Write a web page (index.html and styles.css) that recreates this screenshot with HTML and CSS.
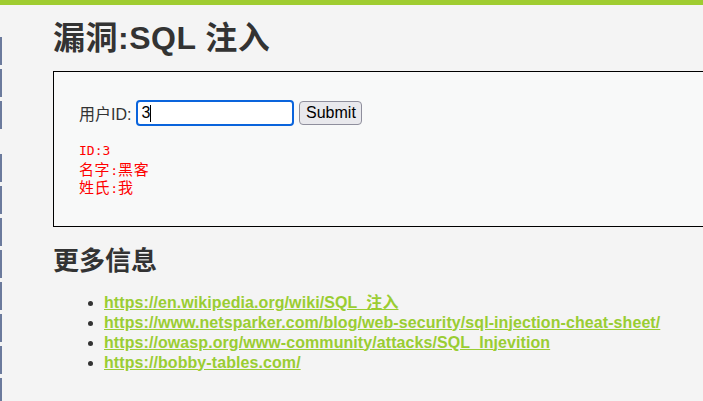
FILE: index.html
```html
<!DOCTYPE html>
<html lang="zh">
<head>
<meta charset="utf-8">
<title>漏洞:SQL 注入</title>
<link rel="stylesheet" href="styles.css">
</head>
<body>
<div class="topbar"></div>
<div class="layout">
  <nav class="sidebar">
    <ul class="menu">
      <li></li><li></li><li></li>
    </ul>
    <ul class="menu menu-second">
      <li></li><li></li><li></li><li></li><li></li><li></li><li></li><li></li>
    </ul>
  </nav>
  <main class="main">
    <h1 class="title">漏洞:SQL 注入</h1>
    <div class="vuln-box">
      <form class="form-row">
        <label class="label" for="uid">用户ID:</label>
        <span class="input-wrap">
          <input class="text-input" id="uid" type="text" value="3">
          <span class="caret"></span>
        </span>
        <button class="submit" type="button">Submit</button>
      </form>
      <div class="result">
        <div class="line">ID:3</div>
        <div class="line"><span class="cjk">名字</span>:<span class="cjk">黑客</span></div>
        <div class="line"><span class="cjk">姓氏</span>:<span class="cjk">我</span></div>
      </div>
    </div>
    <h2 class="subtitle">更多信息</h2>
    <ul class="links">
      <li><a href="#">https://en.wikipedia.org/wiki/SQL_注入</a></li>
      <li><a href="#">https://www.netsparker.com/blog/web-security/sql-injection-cheat-sheet/</a></li>
      <li><a href="#">https://owasp.org/www-community/attacks/SQL_Injevition</a></li>
      <li><a href="#">https://bobby-tables.com/</a></li>
    </ul>
  </main>
</div>
</body>
</html>
```

FILE: styles.css
```css
html, body {
  margin: 0;
  padding: 0;
}
body {
  background: #f4f4f4;
  color: #333;
  font-family: "Liberation Sans", Arial, "Noto Sans CJK SC", sans-serif;
  font-size: 16px;
  width: 703px;
  height: 401px;
  overflow: hidden;
}
.topbar {
  height: 5px;
  background: #9fcc30;
}
.layout {
  display: flex;
  align-items: flex-start;
}
.sidebar {
  width: 2px;
  flex: none;
  padding-top: 32px;
}
.menu {
  list-style: none;
  margin: 0;
  padding: 0;
  display: flex;
  flex-direction: column;
  gap: 4px;
}
.menu li {
  height: 28px;
  background: #6b7a9c;
}
.menu-second {
  margin-top: 25px;
}
.main {
  flex: none;
  padding-left: 51px;
}
.title {
  margin: 13px 0 0;
  font-size: 32px;
  line-height: 40px;
  letter-spacing: 0.5px;
  font-weight: bold;
  color: #333;
}
.vuln-box {
  margin-top: 13px;
  width: 700px;
  border: 1px solid #000;
  background: #f8f9f9;
  padding: 28px 25px 28px;
  box-sizing: border-box;
}
.form-row {
  display: flex;
  align-items: center;
  height: 26px;
  margin: 0;
}
.label {
  color: #333;
  font-size: 16px;
  margin-right: 5px;
}
.input-wrap {
  position: relative;
  display: block;
}
.text-input {
  display: block;
  box-sizing: border-box;
  width: 158px;
  height: 26px;
  border: 2px solid #0a64dc;
  border-radius: 4px;
  background: #fff;
  padding: 0 3px;
  font-family: "Liberation Sans", Arial, sans-serif;
  font-size: 16px;
  color: #000;
  outline: none;
  caret-color: transparent;
}
.caret {
  position: absolute;
  left: 14px;
  top: 5px;
  width: 1px;
  height: 17px;
  background: #000;
}
.submit {
  margin-left: 5px;
  box-sizing: border-box;
  height: 24px;
  width: 63px;
  padding: 0;
  border: 1px solid #8f8f9d;
  border-radius: 4px;
  background: #e9e9ed;
  font-family: "Liberation Sans", Arial, sans-serif;
  font-size: 16px;
  color: #000;
}
.result {
  margin-top: 16px;
  color: #f00;
  font-family: "DejaVu Sans Mono", "Liberation Mono", monospace;
  font-size: 13px;
}
.line {
  height: 18.5px;
  line-height: 18.5px;
  white-space: pre;
}
.cjk {
  font-family: "Noto Sans CJK SC", sans-serif;
  font-size: 15px;
  letter-spacing: 0.6px;
  line-height: 15px;
}
.subtitle {
  margin: 18px 0 0;
  font-size: 26px;
  line-height: 32px;
  font-weight: bold;
  color: #333;
}
.links {
  margin: 16px 0 0;
  padding-left: 51px;
  font-weight: bold;
  line-height: 20px;
}
.links li::marker {
  color: #333;
}
.links a {
  color: #9acd32;
  text-decoration: underline;
  letter-spacing: 0.08px;
  white-space: nowrap;
}
```
